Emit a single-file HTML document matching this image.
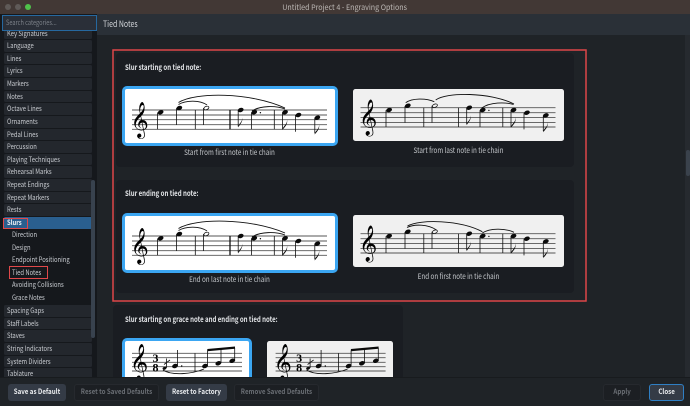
<!DOCTYPE html>
<html>
<head>
<meta charset="utf-8">
<style>
html,body{margin:0;padding:0;background:#1f2327;}
body{width:690px;height:406px;overflow:hidden;position:relative;font-family:"Noto Sans CJK JP","Liberation Sans",sans-serif;color:#d4d7db;font-size:8px;}
.a{position:absolute;white-space:nowrap;box-sizing:border-box;}
.t{display:inline-block;transform:scaleX(.84);transform-origin:left center;}
.it{position:absolute;left:3.5px;width:85px;height:11.5px;background:#23272d;border-radius:1.5px;line-height:12.5px;padding-left:3.5px;font-size:7px;color:#c9ccd1;white-space:nowrap;overflow:hidden;}
.sub{position:absolute;left:11.5px;height:11.5px;line-height:12.5px;font-size:7px;color:#c9ccd1;white-space:nowrap;}
.btn{position:absolute;top:384px;height:17px;line-height:17px;text-align:center;border-radius:3px;font-size:7.2px;font-weight:700;white-space:nowrap;box-sizing:border-box;}
.btn span{display:inline-block;transform:scaleX(.86);transform-origin:center;}
.on{background:#343b46;color:#e8eaed;}
.off{background:#1c1f23;border:1px solid #26292e;color:#696d73;line-height:15px;}
.card{position:absolute;background:#1a1d22;border-radius:4px;}
.h{position:absolute;font-size:7.5px;font-weight:700;color:#e2e4e7;white-space:nowrap;line-height:11px;transform:scaleX(.81);transform-origin:left center;}
.cap{position:absolute;font-size:7.5px;color:#c3c6ca;white-space:nowrap;text-align:center;line-height:11px;transform:scaleX(.84);transform-origin:center;}
.w{position:absolute;background:#fff;border:3px solid #3ba6f2;border-radius:5px;box-sizing:border-box;}
.g{position:absolute;background:#f0f0f0;border-radius:2.5px;}
</style>
</head>
<body>
<!-- title bar -->
<div class="a" style="left:0;top:0;width:690px;height:14px;background:#423835;"></div>
<div class="a" style="left:4.5px;top:3.5px;width:6px;height:6px;border-radius:50%;background:#5f5a58;"></div>
<div class="a" style="left:14.5px;top:3.5px;width:6px;height:6px;border-radius:50%;background:#5f5a58;"></div>
<div class="a" style="left:24.5px;top:3.5px;width:6px;height:6px;border-radius:50%;background:#4fc24a;"></div>
<div class="a" style="left:0;top:1.5px;width:690px;text-align:center;font-size:7.5px;line-height:11px;color:#bdb9b6;"><span style="display:inline-block;transform:scaleX(.95);">Untitled Project 4 - Engraving Options</span></div>

<!-- sidebar -->
<div class="a" style="left:0;top:14px;width:97px;height:363px;background:#15181c;"></div>
<div class="it" style="top:27.5px;"><span class="t">Key Signatures</span></div>
<div class="it" style="top:40px;"><span class="t">Language</span></div>
<div class="it" style="top:52.7px;"><span class="t">Lines</span></div>
<div class="it" style="top:65.4px;"><span class="t">Lyrics</span></div>
<div class="it" style="top:78px;"><span class="t">Markers</span></div>
<div class="it" style="top:90.7px;"><span class="t">Notes</span></div>
<div class="it" style="top:103.4px;"><span class="t">Octave Lines</span></div>
<div class="it" style="top:116px;"><span class="t">Ornaments</span></div>
<div class="it" style="top:128.7px;"><span class="t">Pedal Lines</span></div>
<div class="it" style="top:141px;"><span class="t">Percussion</span></div>
<div class="it" style="top:153.7px;"><span class="t">Playing Techniques</span></div>
<div class="it" style="top:166.3px;"><span class="t">Rehearsal Marks</span></div>
<div class="it" style="top:179px;"><span class="t">Repeat Endings</span></div>
<div class="it" style="top:191.7px;"><span class="t">Repeat Markers</span></div>
<div class="it" style="top:204.3px;"><span class="t">Rests</span></div>
<div class="it" style="top:217px;background:#2a5f8f;color:#eef2f6;font-weight:700;"><span class="t">Slurs</span></div>
<div class="sub" style="top:229px;"><span class="t">Direction</span></div>
<div class="sub" style="top:241.5px;"><span class="t">Design</span></div>
<div class="sub" style="top:254px;"><span class="t">Endpoint Positioning</span></div>
<div class="sub" style="top:266.7px;"><span class="t">Tied Notes</span></div>
<div class="sub" style="top:279px;"><span class="t">Avoiding Collisions</span></div>
<div class="sub" style="top:292px;"><span class="t">Grace Notes</span></div>
<div class="it" style="top:305px;"><span class="t">Spacing Gaps</span></div>
<div class="it" style="top:317.7px;"><span class="t">Staff Labels</span></div>
<div class="it" style="top:330.4px;"><span class="t">Staves</span></div>
<div class="it" style="top:343px;"><span class="t">String Indicators</span></div>
<div class="it" style="top:355.7px;"><span class="t">System Dividers</span></div>
<div class="it" style="top:368.4px;"><span class="t">Tablature</span></div>
<div class="a" style="left:90.5px;top:180px;width:4.5px;height:158px;border-radius:2px;background:#38424e;"></div>
<!-- search -->
<div class="a" style="left:1.5px;top:15px;width:95px;height:16px;background:#2a2f38;border:1px solid #26689f;font-size:7px;line-height:15px;padding-left:3px;color:#7b8088;"><span style="display:inline-block;transform:scaleX(.8);transform-origin:left center;">Search categories...</span></div>
<!-- sidebar red marks -->
<div class="a" style="left:3px;top:218px;width:25px;height:10.5px;border:1px solid #e0484a;"></div>
<div class="a" style="left:8.5px;top:265.7px;width:39px;height:13.3px;border:1px solid #e0484a;"></div>

<!-- main -->
<div class="a" style="left:97px;top:14px;width:593px;height:20.5px;background:#2a3037;font-size:8.5px;line-height:20px;padding-left:6px;color:#d6d9dd;"><span style="display:inline-block;transform:scaleX(.82);transform-origin:left center;">Tied Notes</span></div>
<div class="a" style="left:685px;top:35px;width:5px;height:342px;background:#262a2f;"></div>
<div class="a" style="left:685.5px;top:150px;width:4px;height:26px;background:#3a424c;border-radius:2px;"></div>

<div class="card" style="left:116px;top:53px;width:458px;height:113.5px;"></div>
<div class="card" style="left:116px;top:180px;width:458px;height:113px;"></div>
<div class="card" style="left:113px;top:305px;width:290px;height:80px;"></div>

<div class="h" style="left:125px;top:62px;">Slur starting on tied note:</div>
<div class="h" style="left:125px;top:188px;">Slur ending on tied note:</div>
<div class="h" style="left:125px;top:314px;">Slur starting on grace note and ending on tied note:</div>

<div class="w" style="left:122px;top:86px;width:215.5px;height:60px;"></div>
<div class="g" style="left:353px;top:89px;width:211px;height:51.7px;"></div>
<div class="w" style="left:122px;top:212.5px;width:215.5px;height:60px;"></div>
<div class="g" style="left:353px;top:215px;width:211px;height:51.7px;"></div>
<div class="w" style="left:122px;top:338px;width:130px;height:50px;"></div>
<div class="g" style="left:267.3px;top:341px;width:125.7px;height:45px;"></div>

<div class="cap" style="left:122px;width:215px;top:147px;">Start from first note in tie chain</div>
<div class="cap" style="left:353px;width:211px;top:145px;">Start from last note in tie chain</div>
<div class="cap" style="left:122px;width:215px;top:273.5px;">End on last note in tie chain</div>
<div class="cap" style="left:353px;width:211px;top:271px;">End on first note in tie chain</div>

<svg class="a" style="left:0;top:0;" width="690" height="406" viewBox="0 0 690 406">
<defs>
<g id="st" fill="none" stroke="#555" stroke-width=".9">
<path d="M132 110H327M132 115H327M132 119.7H327M132 124.7H327M132 129.3H327"/>
</g>
<g id="mus">
<g stroke="#111" stroke-width=".8" fill="none">
<path d="M157.5 112.5V129.3M176.5 108.3V125M195.3 110V129.3M203.5 108V125M238.2 110V126.5M251.5 112.5V129.3M274.3 110V129.3M282.5 112.5V129.3M295.5 115V131.7M314.8 118V133.3"/>
<path d="M230 110V129.3" stroke-width="1.3"/>
</g>
<g fill="#0a0a0a">
<ellipse cx="160.6" cy="112.3" rx="3" ry="2.1" transform="rotate(-22 160.6 112.3)"/>
<ellipse cx="179.3" cy="108" rx="3" ry="2.1" transform="rotate(-22 179.3 108)"/>
<ellipse cx="240.7" cy="110" rx="3" ry="2.1" transform="rotate(-22 240.7 110)"/>
<ellipse cx="254.2" cy="112.3" rx="3" ry="2.1" transform="rotate(-22 254.2 112.3)"/>
<ellipse cx="285" cy="112.3" rx="3" ry="2.1" transform="rotate(-22 285 112.3)"/>
<ellipse cx="298.4" cy="115" rx="3" ry="2.1" transform="rotate(-22 298.4 115)"/>
<ellipse cx="317.3" cy="117.7" rx="3" ry="2.1" transform="rotate(-22 317.3 117.7)"/>
<circle cx="260.4" cy="112.7" r=".7"/>
<path d="M238 127.5C238.5 123.5 242.5 122 242.5 117.5C242.8 121.5 240.5 124 238 127.5Z"/>
<path d="M282.3 130C282.8 126 287.5 124.5 287 119.5C288 124 285 127 282.3 130Z"/>
<path d="M314.6 134.5C315 130.5 319.5 129.5 319 124.5C320 128.5 317.3 131.5 314.6 134.5Z"/>
</g>
<ellipse cx="206.4" cy="108" rx="2.6" ry="1.6" transform="rotate(-22 206.4 108)" fill="#fff" stroke="#111" stroke-width=".8"/>
</g>
<g id="mus2">
<g stroke="#111" stroke-width=".8" fill="none">
<path d="M157.5 112.5V129.3M176.5 108.3V125M195.3 110V129.3M203.5 108V125M238.2 110V126.5M251.5 112.5V129.3M274.3 110V129.3M282.5 112.5V129.3M295.5 115V131.7M314.8 118V133.3M230 110V129.3"/>
</g>
<g fill="#0a0a0a">
<ellipse cx="160.6" cy="112.3" rx="3" ry="2.1" transform="rotate(-22 160.6 112.3)"/>
<ellipse cx="179.3" cy="108" rx="3" ry="2.1" transform="rotate(-22 179.3 108)"/>
<ellipse cx="240.7" cy="110" rx="3" ry="2.1" transform="rotate(-22 240.7 110)"/>
<ellipse cx="254.2" cy="112.3" rx="3" ry="2.1" transform="rotate(-22 254.2 112.3)"/>
<ellipse cx="285" cy="112.3" rx="3" ry="2.1" transform="rotate(-22 285 112.3)"/>
<ellipse cx="298.4" cy="115" rx="3" ry="2.1" transform="rotate(-22 298.4 115)"/>
<ellipse cx="317.3" cy="117.7" rx="3" ry="2.1" transform="rotate(-22 317.3 117.7)"/>
<circle cx="260.4" cy="112.7" r=".7"/>
<path d="M238 127.5C238.5 123.5 242.5 122 242.5 117.5C242.8 121.5 240.5 124 238 127.5Z"/>
<path d="M282.3 130C282.8 126 287.5 124.5 287 119.5C288 124 285 127 282.3 130Z"/>
<path d="M314.6 134.5C315 130.5 319.5 129.5 319 124.5C320 128.5 317.3 131.5 314.6 134.5Z"/>
</g>
<ellipse cx="206.4" cy="108" rx="2.6" ry="1.6" transform="rotate(-22 206.4 108)" fill="#f0f0f0" stroke="#111" stroke-width=".8"/>
</g>
<clipPath id="c5"><rect x="110" y="330" width="300" height="47"/></clipPath>
<g id="gr">
<path d="M132 353.3H242M132 357.7H242M132 362.3H242M132 366.7H242M132 371H242" stroke="#555" stroke-width=".9" fill="none"/>
<g stroke="#111" stroke-width=".8" fill="none">
<path d="M177.5 366V350M195 353.3V371M207.5 366V350.5M221 363.3V349M234.7 361V348M166.5 368V358.5M164 364.5L170 360"/>
</g>
<path d="M207.3 349L235 346.5V348.7L207.3 351.2Z" fill="#0a0a0a"/>
<g fill="#0a0a0a">
<ellipse cx="164.5" cy="368.3" rx="2" ry="1.4" transform="rotate(-22 164.5 368.3)"/>
<ellipse cx="175" cy="366" rx="3" ry="2.1" transform="rotate(-22 175 366)"/>
<ellipse cx="205" cy="366" rx="3" ry="2.1" transform="rotate(-22 205 366)"/>
<ellipse cx="218.3" cy="363.3" rx="3" ry="2.1" transform="rotate(-22 218.3 363.3)"/>
<ellipse cx="232.2" cy="360.8" rx="3" ry="2.1" transform="rotate(-22 232.2 360.8)"/>
<circle cx="181.7" cy="366" r=".7"/>
</g>
<path d="M163 370C172 376 192 374 204 369" fill="none" stroke="#111" stroke-width=".9"/>
</g>
</defs>

<!-- score 1 -->
<use href="#st"/>
<text x="130.5" y="130" font-family="DejaVu Sans" font-size="31" fill="#000">&#x1D11E;</text>
<use href="#mus"/>
<g fill="none" stroke="#111" stroke-width=".9">
<path d="M178.5 104.5C186 100 200 100 207 105"/>
<path d="M178.5 102.5C195 92 250 92 285 108"/>
<path d="M252 111C260 105.5 276 105.5 285 109"/>
</g>

<!-- score 2 -->
<g transform="translate(228.5 -2.3)">
<use href="#st"/>
<text x="130.5" y="130" font-family="DejaVu Sans" font-size="31" fill="#000">&#x1D11E;</text>
<use href="#mus2"/>
</g>
<g fill="none" stroke="#111" stroke-width=".9">
<path d="M405.7 102.7C412 98 426 98 434.3 101.7"/>
<path d="M435.7 100C446 92 490 92 514 104"/>
<path d="M481.7 108C490 102 505 102 513.5 104.5"/>
</g>

<!-- score 3 -->
<g transform="translate(0 126)">
<use href="#st"/>
<text x="130.5" y="130" font-family="DejaVu Sans" font-size="31" fill="#000">&#x1D11E;</text>
<use href="#mus"/>
<g fill="none" stroke="#111" stroke-width=".9">
<path d="M178.5 104.5C186 100 200 100 207 105"/>
<path d="M178.5 102.5C195 92 250 92 285 107"/>
<path d="M252 111C260 105.5 276 105.5 285 109"/>
</g>
</g>

<!-- score 4 -->
<g transform="translate(228.5 123.7)">
<use href="#st"/>
<text x="130.5" y="130" font-family="DejaVu Sans" font-size="31" fill="#000">&#x1D11E;</text>
<use href="#mus2"/>
</g>
<g fill="none" stroke="#111" stroke-width=".9">
<path d="M407 227.5C414 224 428 224 436.5 230"/>
<path d="M407.5 226C420 219 460 220 482.3 231.7"/>
<path d="M482.3 233C490 228 505 228 514 232.3"/>
</g>

<!-- scores 5 & 6 -->
<g clip-path="url(#c5)">
<use href="#gr"/>
<text x="130" y="372" font-family="DejaVu Sans" font-size="31" fill="#000">&#x1D11E;</text>
<text x="155.5" y="362" text-anchor="middle" font-family="Liberation Serif" font-weight="700" font-size="12" fill="#000">3</text>
<text x="155.5" y="371.5" text-anchor="middle" font-family="Liberation Serif" font-weight="700" font-size="12" fill="#000">8</text>
<g transform="translate(143.6 0)">
<use href="#gr"/>
<text x="130" y="372" font-family="DejaVu Sans" font-size="31" fill="#000">&#x1D11E;</text>
<text x="155.5" y="362" text-anchor="middle" font-family="Liberation Serif" font-weight="700" font-size="12" fill="#000">3</text>
<text x="155.5" y="371.5" text-anchor="middle" font-family="Liberation Serif" font-weight="700" font-size="12" fill="#000">8</text>
</g>
</g>

<!-- red rect -->
<rect x="113" y="50" width="473" height="251" fill="none" stroke="#dd4648" stroke-width="1.5"/>
</svg>

<!-- footer -->
<div class="a" style="left:0;top:376.5px;width:690px;height:29.5px;background:#1f2327;border-top:1px solid #181b1e;"></div>
<div class="btn on" style="left:7.5px;width:58.5px;"><span>Save as Default</span></div>
<div class="btn off" style="left:73.5px;width:85px;"><span>Reset to Saved Defaults</span></div>
<div class="btn on" style="left:166px;width:61px;"><span>Reset to Factory</span></div>
<div class="btn off" style="left:234px;width:85px;"><span>Remove Saved Defaults</span></div>
<div class="btn off" style="left:603px;width:38px;"><span>Apply</span></div>
<div class="btn on" style="left:649px;width:35px;border:1px solid #2f7fc4;line-height:15px;"><span>Close</span></div>
</body>
</html>
